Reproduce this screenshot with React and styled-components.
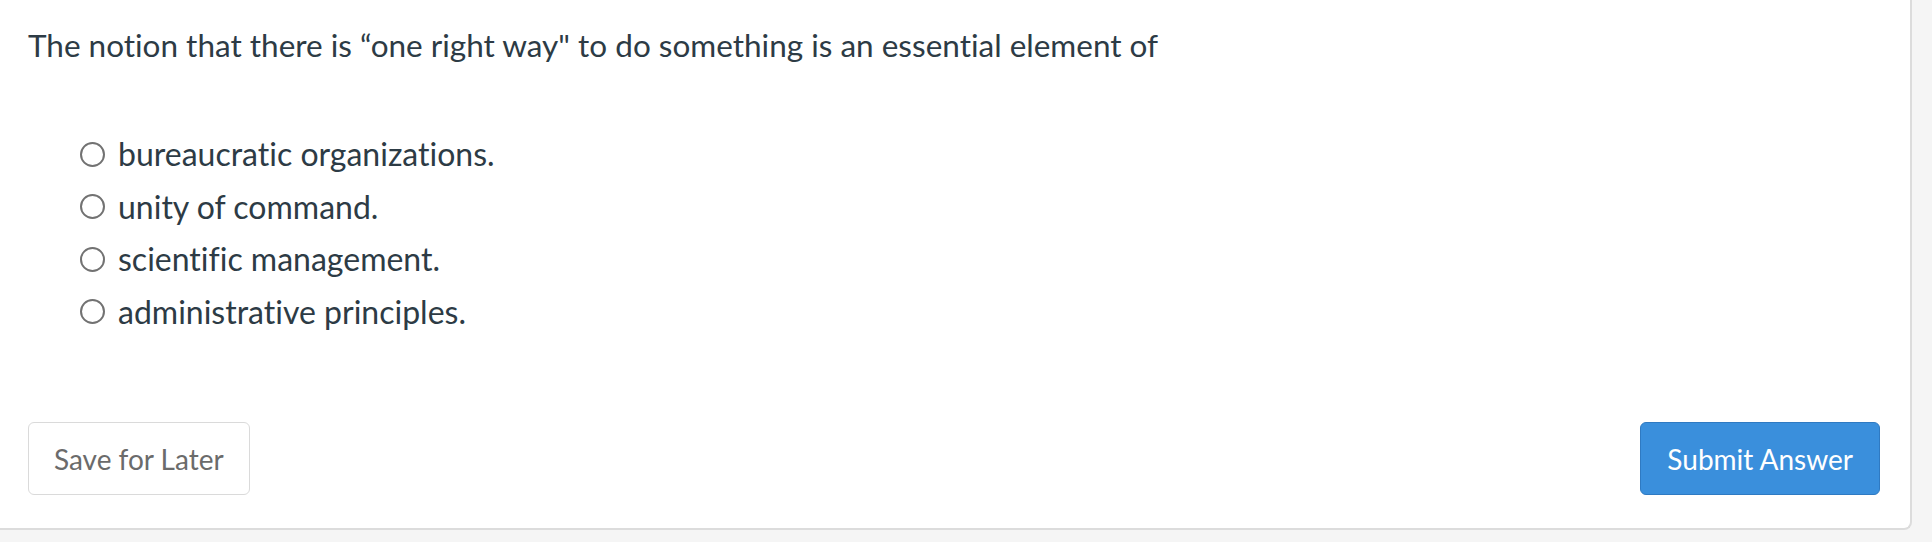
import React, { useState } from "react";
import styled, { createGlobalStyle } from "styled-components";

const GlobalStyle = createGlobalStyle`
    html, body {
        margin: 0;
        padding: 0;
        background: #f5f5f5;
    }
    body {
        font-family: Lato, "Noto Sans", sans-serif;
        color: #2d3b45;
        font-variant-ligatures: none;
    }
`

const options = [
    "bureaucratic organizations.",
    "unity of command.",
    "scientific management.",
    "administrative principles.",
];

const App = () => {
    const [picked, setPicked] = useState(null);

    return (
        <>
            <GlobalStyle />
            <Card>
                <Question>
                    The notion that there is “one right way" to do something is an essential element of
                </Question>

                <Options>
                    {options.map((text, i) => (
                        <Option key={text} onClick={() => setPicked(i)}>
                            <Radio checked={picked === i} />
                            <span>{text}</span>
                        </Option>
                    ))}
                </Options>

                <Footer>
                    <SaveButton>Save for Later</SaveButton>
                    <SubmitButton>Submit Answer</SubmitButton>
                </Footer>
            </Card>
        </>
    );
}

export default App;

const Card = styled.div`
    width: 1912px;
    height: 530px;
    box-sizing: border-box;
    background: #fff;
    border-right: 2px solid #dcdcdc;
    border-bottom: 2px solid #dcdcdc;
    border-bottom-right-radius: 8px;
    display: flex;
    flex-direction: column;
    padding: 24px 30px 0 28px;
`

const Question = styled.div`
    font-size: 31.5px;
    line-height: 42px;
`

const Options = styled.div`
    margin-top: 62px;
    padding-left: 52px;
    display: flex;
    flex-direction: column;
`

const Option = styled.label`
    height: 52.5px;
    display: flex;
    align-items: center;
    gap: 13px;
    font-size: 32px;
    line-height: 52px;
    cursor: pointer;
`

const Radio = styled.span`
    width: 25px;
    height: 25px;
    box-sizing: border-box;
    border-radius: 50%;
    border: 2px solid #727272;
    flex-shrink: 0;
    background: ${p => p.checked ? "radial-gradient(circle, #2d3b45 35%, transparent 40%)" : "#fff"};
`

const Footer = styled.div`
    margin-top: auto;
    margin-bottom: 33px;
    display: flex;
    justify-content: space-between;
    align-items: center;
`

const SaveButton = styled.button`
    height: 73px;
    padding: 0 25px;
    font-family: Lato, "Noto Sans", sans-serif;
    font-size: 28px;
    color: #6b6b6b;
    background: #fff;
    border: 1px solid #dadada;
    border-radius: 6px;
    cursor: pointer;
`

const SubmitButton = styled.button`
    height: 73px;
    padding: 0 26px;
    font-family: Lato, "Noto Sans", sans-serif;
    font-size: 28px;
    color: #fff;
    background: #3a8fdc;
    border: 1px solid #2f7ac2;
    border-radius: 6px;
    cursor: pointer;
`
